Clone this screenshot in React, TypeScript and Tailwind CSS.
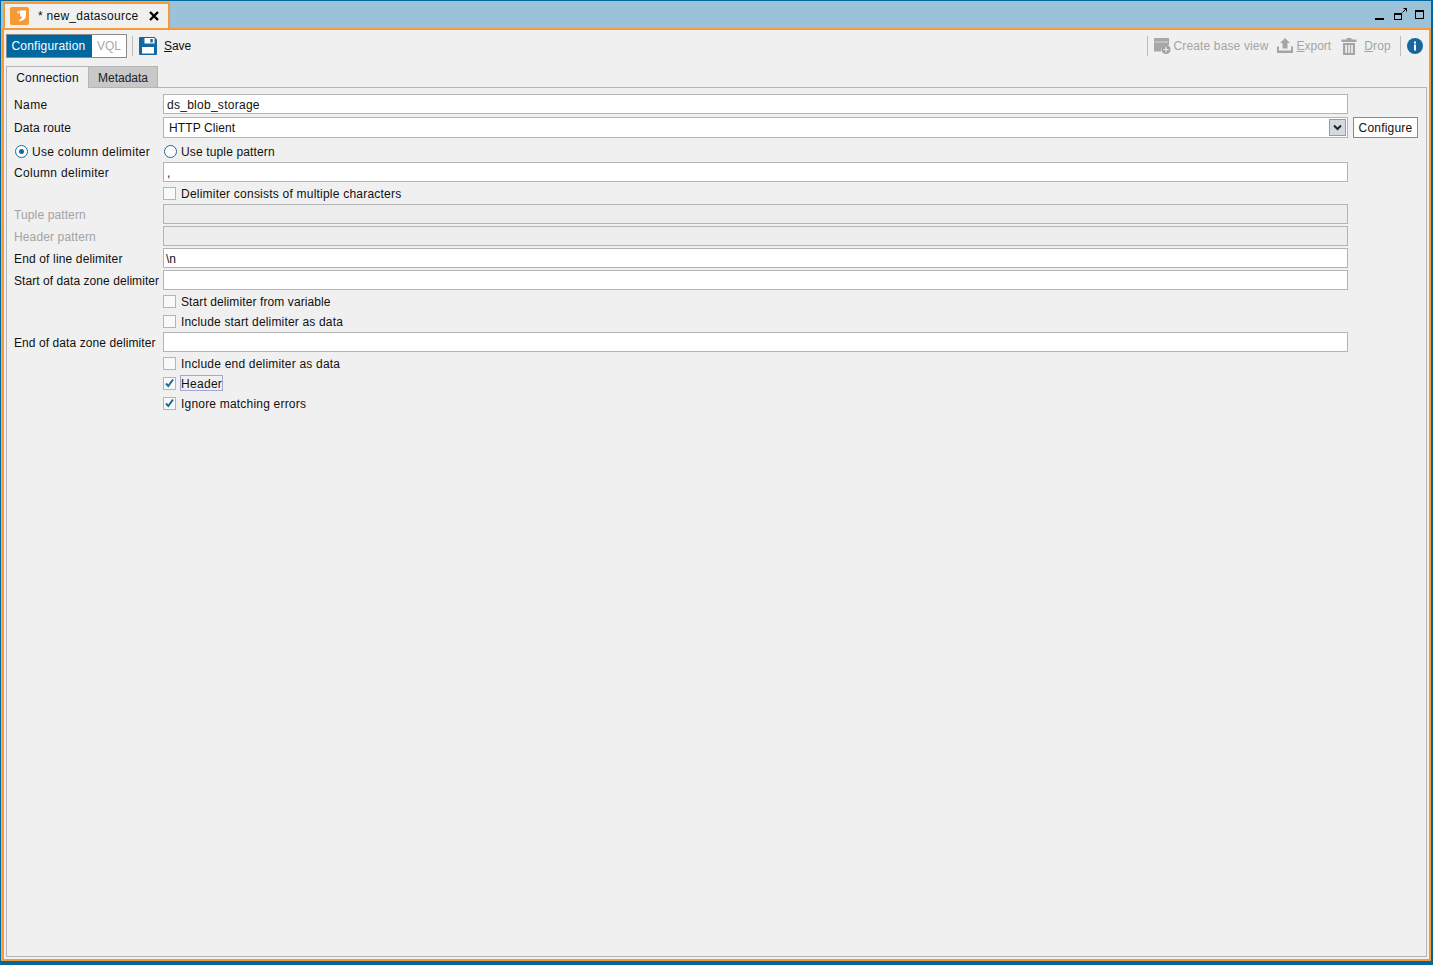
const font = "font-['Liberation_Sans',Arial,sans-serif]";

const CheckBox = ({ checked = false }: { checked?: boolean }) => (
  <span className="flex h-[13px] w-[13px] shrink-0 items-center justify-center border border-[#b5b5b5] bg-[#f9f9f9]">
    {checked && (
      <svg width="11" height="11" viewBox="0 0 11 11">
        <path d="M2 5.5 L4.3 8 L9 1.5" fill="none" stroke="#1b6a9c" strokeWidth="2" />
      </svg>
    )}
  </span>
);

const Radio = ({ checked = false }: { checked?: boolean }) => (
  <span className="flex h-[13px] w-[13px] shrink-0 items-center justify-center rounded-full border border-[#1d6a99] bg-white">
    {checked && <span className="h-[5px] w-[5px] rounded-full bg-[#1d6a99]" />}
  </span>
);

const Field = ({ label, value = "", disabled = false, track, valueTrack = "" }: { label: string; value?: string; disabled?: boolean; track: string; valueTrack?: string }) => (
  <div className="flex h-[22px] items-center">
    <span className={`w-[149px] shrink-0 whitespace-nowrap pt-[2px] ${track} ${disabled ? "text-[#a3a3a3]" : "text-[#111]"}`}>{label}</span>
    <div className={`flex h-[20px] w-[1185px] items-center border border-[#b4b4b4] pl-[3px] text-[#111] ${disabled ? "bg-[#ededed]" : "bg-white"}`}>
      <span className={`pt-[2px] ${valueTrack}`}>{value}</span>
    </div>
  </div>
);

const CheckRow = ({ label, checked, focus, track }: { label: string; checked?: boolean; focus?: boolean; track: string }) => (
  <div className="flex h-[20px] items-center pl-[149px]">
    <CheckBox checked={checked} />
    <span className={`ml-[4px] text-[#111] ${track} ${focus ? "border border-[#a9a4d6] pt-[2px]" : "px-px pt-[2px]"}`}>{label}</span>
  </div>
);

const Mnemonic = ({ first, rest, className }: { first: string; rest: string; className: string }) => (
  <span className={className}>
    <span className="underline">{first}</span>
    {rest}
  </span>
);

const LogoIcon = () => (
  <span className="flex h-[18px] w-[19px] items-center justify-center rounded-[2px] bg-[#f79a36]">
    <svg width="19" height="18" viewBox="0 0 19 18">
      <rect x="7.5" y="4" width="2" height="2.5" fill="#fff" opacity="0.8" />
      <path d="M10 3.5 H16 V9 C16 11.5 13.5 13.5 9.5 14.5 L9 13 C10.5 12.5 11.7 11.5 12 9.5 H10 Z" fill="#fff" />
    </svg>
  </span>
);

const SaveIcon = () => (
  <svg width="19" height="19" viewBox="0 0 19 19">
    <path d="M0 1 A1 1 0 0 1 1 0 H15.5 L18 2.5 V17 A1 1 0 0 1 17 18 H1 A1 1 0 0 1 0 17 Z" fill="#14689f" />
    <rect x="5.5" y="1" width="10" height="5.5" fill="#fff" />
    <rect x="11.3" y="2" width="2.5" height="3.5" fill="#14689f" />
    <rect x="3" y="10" width="12" height="6.5" fill="#fff" />
  </svg>
);

const BaseViewIcon = () => (
  <svg width="17" height="16" viewBox="0 0 17 16">
    <path d="M0 0 H15 V7 H12 A5.5 5.5 0 0 0 7 13.5 H0 Z" fill="#a8a8a8" />
    <rect x="1" y="3.5" width="13" height="1" fill="#d8d8d8" />
    <circle cx="12" cy="11.5" r="4.5" fill="#a0a0a0" />
    <path d="M11.4 8.8 h1.2 v2.1 h2.1 v1.2 h-2.1 v2.1 h-1.2 v-2.1 h-2.1 v-1.2 h2.1 Z" fill="#efefef" />
  </svg>
);

const ExportIcon = () => (
  <svg width="16" height="16" viewBox="0 0 16 16">
    <path d="M8 0 L13 5 H10.5 V10.5 H5.5 V5 H3 Z" fill="#a5a5a5" />
    <path d="M0 8.5 H2 V12.5 H14 V8.5 H16 V15 H0 Z" fill="#a5a5a5" />
  </svg>
);

const TrashIcon = () => (
  <svg width="16" height="17" viewBox="0 0 16 17">
    <path d="M5.5 0 H10.5 V1.5 H15.5 V4 H0.5 V1.5 H5.5 Z" fill="#a5a5a5" />
    <path d="M2 5 H14 V17 H2 Z" fill="#a5a5a5" />
    <path d="M4.3 7 H6 V15 H4.3 Z M7.2 7 H8.9 V15 H7.2 Z M10.1 7 H11.8 V15 H10.1 Z" fill="#efefef" />
  </svg>
);

const InfoIcon = () => (
  <span className="flex h-[16px] w-[16px] items-center justify-center rounded-full bg-[#14689f]">
    <svg width="16" height="16" viewBox="0 0 16 16">
      <rect x="7" y="3.5" width="2" height="2" fill="#fff" />
      <rect x="7" y="6.5" width="2" height="6" fill="#fff" />
    </svg>
  </span>
);

const WindowButtons = () => (
  <div className="flex items-center pr-[7px]">
    <span className="mt-[8px] h-[2px] w-[9px] bg-black" />
    <svg width="14" height="14" viewBox="0 0 14 14" className="ml-[10px]">
      <rect x="0.5" y="5.5" width="7" height="6" fill="none" stroke="#000" />
      <rect x="0" y="5" width="8" height="2" fill="#000" />
      <path d="M8.5 4.5 L12.5 0.5 M9.5 0.5 H12.5 V3.5" fill="none" stroke="#000" />
    </svg>
    <span className="ml-[7px] h-[9px] w-[9px] border border-t-2 border-black" />
  </div>
);

export default function App() {
  return (
    <div className={`${font} h-[965px] w-[1433px] overflow-hidden border-t border-r-2 border-b-4 border-l border-[#00689f] bg-[#f0f0f0] text-[12px] leading-none`}>
      <div className="flex h-full flex-col border-l border-[#9bc2d8]">
        <div className="flex h-[27px] shrink-0 items-end justify-between bg-[#9bc2d8] pl-px">
          <div className="flex h-[26px] w-[167px] items-center border-x-2 border-t-2 border-[#f79a36] bg-[#f0f0f0] pl-[5px]">
            <LogoIcon />
            <span className="ml-[9px] tracking-[0.27px] text-[#111]">* new_datasource</span>
            <svg width="10" height="10" viewBox="0 0 10 10" className="mb-px ml-[11px]">
              <path d="M1 1 L9 9 M9 1 L1 9" stroke="#000" strokeWidth="2.4" />
            </svg>
          </div>
          <div className="self-center"><WindowButtons /></div>
        </div>

        <div className="flex min-h-0 flex-1 flex-col border-2 border-[#f79a36] pr-[2px] pb-[2px] pl-[2px]">
          <div className="flex h-[31px] shrink-0 items-center justify-between pt-[1px]">
            <div className="flex items-center">
              <div className="flex h-[24px] border border-[#8a8a8a]">
                <span className="flex w-[85px] items-center justify-center bg-[#00689f] pr-[2px] tracking-[0.2px] text-white">Configuration</span>
                <span className="flex w-[34px] items-center justify-center bg-white text-[#a8a8a8]">VQL</span>
              </div>
              <span className="ml-[5px] h-[20px] w-px bg-[#bdbdbd]" />
              <span className="ml-[6px] flex"><SaveIcon /></span>
              <Mnemonic first="S" rest="ave" className="ml-[6px] tracking-[-0.1px] text-[#111]" />
            </div>
            <div className="flex items-center text-[#a5a5a5]">
              <span className="h-[20px] w-px bg-[#bdbdbd]" />
              <span className="ml-[6px] flex"><BaseViewIcon /></span>
              <span className="ml-[3px] tracking-[0.14px]">Create base view</span>
              <span className="ml-[9px] flex"><ExportIcon /></span>
              <Mnemonic first="E" rest="xport" className="ml-[3px]" />
              <span className="ml-[10px] flex"><TrashIcon /></span>
              <Mnemonic first="D" rest="rop" className="ml-[7px] tracking-[0.2px]" />
              <span className="ml-[9px] h-[20px] w-px bg-[#bdbdbd]" />
              <span className="mr-[4px] ml-[6px] flex"><InfoIcon /></span>
            </div>
          </div>

          <div className="flex h-[26px] shrink-0 items-end">
            <span className="relative -mb-px flex h-[22px] w-[83px] items-center justify-center border-x border-t border-[#b4b4b4] bg-[#f0f0f0] tracking-[0.2px] text-[#111]">Connection</span>
            <span className="flex h-[21px] w-[69px] items-center justify-center border-t border-r border-[#b4b4b4] bg-[#c8c8c8] pt-[2px] text-[#222]">Metadata</span>
          </div>

          <div className="min-h-0 flex-1 border border-[#b4b4b4] pt-[5px] pl-[7px]">
            <Field label="Name" value="ds_blob_storage" track="tracking-[0.4px]" valueTrack="tracking-[0.27px]" />
            <div className="flex h-[24px] items-center">
              <span className="w-[149px] shrink-0 pt-[2px] tracking-[0.1px] text-[#111]">Data route</span>
              <div className="flex h-[21px] w-[1185px] items-center justify-between border border-[#b4b4b4] bg-white pr-px pl-[5px] tracking-[0.1px] text-[#111]">
                <span className="pt-[2px]">HTTP Client</span>
                <span className="flex h-[17px] w-[17px] items-center justify-center border border-[#9a9a9a] bg-[#d5d9e2]">
                  <svg width="9" height="7" viewBox="0 0 9 7">
                    <path d="M1 1.5 L4.5 5 L8 1.5" fill="none" stroke="#222" strokeWidth="2" />
                  </svg>
                </span>
              </div>
              <span className="ml-[5px] flex h-[21px] w-[65px] items-center justify-center border border-[#8a8a8a] bg-white pt-[2px] tracking-[0.2px] text-[#111]">Configure</span>
            </div>
            <div className="flex h-[22px] items-center pt-[2px]">
              <span className="flex w-[149px] items-center pl-px">
                <Radio checked />
                <span className="ml-[4px] pt-[2px] tracking-[0.3px] text-[#111]">Use column delimiter</span>
              </span>
              <span className="flex items-center pl-px">
                <Radio />
                <span className="ml-[4px] pt-[2px] tracking-[0.14px] text-[#111]">Use tuple pattern</span>
              </span>
            </div>
            <Field label="Column delimiter" value="," track="tracking-[0.32px]" />
            <CheckRow label="Delimiter consists of multiple characters" track="tracking-[0.22px]" />
            <Field label="Tuple pattern" disabled track="tracking-[0.12px]" />
            <Field label="Header pattern" disabled track="tracking-[0.13px]" />
            <Field label="End of line delimiter" value="\n" track="tracking-[0.15px]" valueTrack="-ml-px tracking-[-0.2px]" />
            <Field label="Start of data zone delimiter" track="tracking-[0.06px]" />
            <CheckRow label="Start delimiter from variable" track="tracking-[0.1px]" />
            <CheckRow label="Include start delimiter as data" track="tracking-[0.17px]" />
            <Field label="End of data zone delimiter" track="tracking-[0.08px]" />
            <CheckRow label="Include end delimiter as data" track="tracking-[0.2px]" />
            <CheckRow label="Header" checked focus track="tracking-[0.3px]" />
            <CheckRow label="Ignore matching errors" checked track="tracking-[0.2px]" />
          </div>
        </div>
      </div>
    </div>
  );
}
